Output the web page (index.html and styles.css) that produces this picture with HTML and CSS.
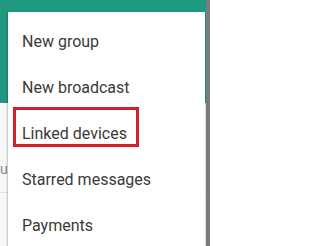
FILE: index.html
```html
<!DOCTYPE html>
<html>
<head>
<meta charset="utf-8">
<link rel="stylesheet" href="styles.css">
</head>
<body>
<div class="screen">
  <div class="app">
    <div class="header"></div>
    <div class="chats">
      <div class="chat-row"><span class="chat-snippet">u</span></div>
      <div class="chat-row"></div>
    </div>
    <div class="menu">
      <div class="item">New group</div>
      <div class="item">New broadcast</div>
      <div class="item"><span class="highlight">Linked devices</span></div>
      <div class="item">Starred messages</div>
      <div class="item">Payments</div>
    </div>
  </div>
  <div class="edge"></div>
</div>
</body>
</html>
```
FILE: styles.css
```css
html, body {
  margin: 0;
  padding: 0;
  background: #ffffff;
}
.screen {
  width: 210px;
  height: 246px;
  display: flex;
  overflow: hidden;
  font-family: Roboto, "Liberation Sans", sans-serif;
}
.app {
  position: relative;
  flex: 1;
  display: flex;
  flex-direction: column;
  background: #f7f7f7;
  overflow: hidden;
}
.header {
  height: 103px;
  background: #1f9980;
  flex: none;
}
.chats {
  flex: 1;
  display: flex;
  flex-direction: column;
}
.chat-row {
  height: 89px;
  border-bottom: 1px solid #e2e2e2;
  display: flex;
  align-items: flex-end;
  flex: none;
}
.chat-snippet {
  display: block;
  margin-left: 0;
  font-size: 14px;
  color: #8a8a8a;
  padding-bottom: 15px;
  white-space: nowrap;
}
.edge {
  width: 4px;
  flex: none;
  background: #7b7b7b;
  box-shadow: -1px 0 1px rgba(0,0,0,0.15);
}
.menu {
  position: absolute;
  top: 12px;
  left: 8px;
  width: 197px;
  height: 250px;
  background: #ffffff;
  padding-top: 6px;
  box-sizing: border-box;
  box-shadow: 0 1px 3px rgba(0,0,0,0.25), -1px 0 1px rgba(0,0,0,0.08);
}
.item {
  height: 46px;
  display: flex;
  align-items: center;
  padding-left: 14px;
  font-size: 16px;
  color: #3a3a3a;
  white-space: nowrap;
  position: relative;
}
.highlight {
  position: relative;
}
.highlight::before {
  content: "";
  position: absolute;
  left: -9px;
  top: -20px;
  width: 126px;
  height: 40px;
  border: 3px solid #d0202b;
  box-sizing: border-box;
  transform: translateY(3px);
}
```
